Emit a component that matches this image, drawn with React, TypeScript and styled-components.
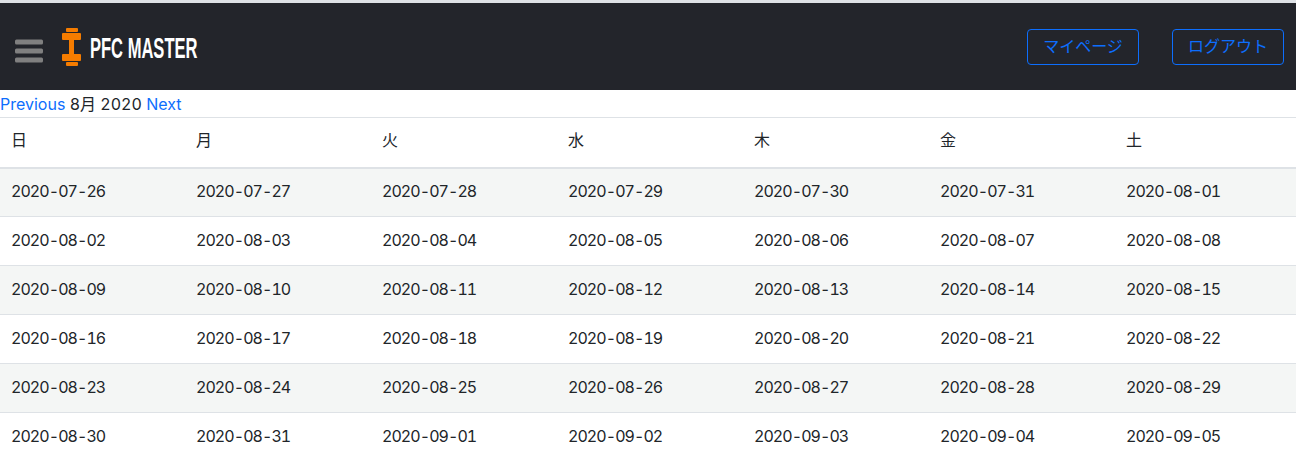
import React from 'react'
import styled, { createGlobalStyle } from 'styled-components'

const GlobalStyle = createGlobalStyle`
  html, body {
    margin: 0;
    background: #fff;
  }
  body {
    font-family: Inter, "Noto Sans CJK JP", sans-serif;
    font-size: 16px;
    line-height: 24px;
    font-variant-numeric: tabular-nums;
    color: #212529;
  }
`

const Page = styled.div`
  border-top: 3px solid #dee2e6;
`

const Navbar = styled.nav`
  height: 87px;
  background: #23252b;
  display: flex;
  align-items: center;
  justify-content: space-between;
  padding: 0 12px 0 15px;
`

const Brand = styled.div`
  display: flex;
  align-items: center;
`

const MenuIcon = styled.svg`
  width: 28px;
  height: 24px;
  margin: 8px 19px 0 0;
`

const Logo = styled.svg`
  width: 19px;
  height: 38px;
  margin-right: 9px;
`

const BrandName = styled.span`
  display: inline-block;
  padding-top: 2px;
  font-family: "Liberation Sans", sans-serif;
  font-weight: 700;
  font-size: 29px;
  line-height: 28px;
  color: #fff;
  white-space: nowrap;
  transform: scaleX(0.57);
  transform-origin: left center;
`

const NavActions = styled.div`
  display: flex;
  gap: 33px;
`

const OutlineButton = styled.button`
  width: 112px;
  height: 36px;
  padding: 0 0 4px;
  background: transparent;
  border: 1px solid #0d6efd;
  border-radius: 4px;
  color: #0d6efd;
  font-family: "Noto Sans CJK JP", sans-serif;
  font-size: 16px;
  line-height: 24px;
`

const MonthBar = styled.div`
  height: 26px;
  padding-top: 1px;
  line-height: 27px;
  white-space: pre;
`

const MonthLink = styled.a`
  color: #0d6efd;
`

const Table = styled.table`
  width: 100%;
  table-layout: fixed;
  border-collapse: collapse;
`

const Th = styled.th`
  box-sizing: border-box;
  width: 186px;
  height: 50px;
  padding: 0 11px 4px;
  text-align: left;
  font-weight: 400;
  border-top: 1px solid #dee2e6;
  border-bottom: 2px solid #dee2e6;

  &:first-child {
    width: 185px;
  }

  &:last-child {
    width: auto;
  }
`

const Row = styled.tr<{ $striped: boolean }>`
  background: ${(p) => (p.$striped ? '#f4f6f5' : '#fff')};

  &:not(:last-child) td {
    border-bottom: 1px solid #dee2e6;
  }
`

const Td = styled.td`
  box-sizing: border-box;
  height: 49px;
  padding: 0 11px 2px;
  letter-spacing: -0.95px;
  white-space: nowrap;
`

const DAYS = ['日', '月', '火', '水', '木', '金', '土']

const WEEKS = [
  ['2020-07-26', '2020-07-27', '2020-07-28', '2020-07-29', '2020-07-30', '2020-07-31', '2020-08-01'],
  ['2020-08-02', '2020-08-03', '2020-08-04', '2020-08-05', '2020-08-06', '2020-08-07', '2020-08-08'],
  ['2020-08-09', '2020-08-10', '2020-08-11', '2020-08-12', '2020-08-13', '2020-08-14', '2020-08-15'],
  ['2020-08-16', '2020-08-17', '2020-08-18', '2020-08-19', '2020-08-20', '2020-08-21', '2020-08-22'],
  ['2020-08-23', '2020-08-24', '2020-08-25', '2020-08-26', '2020-08-27', '2020-08-28', '2020-08-29'],
  ['2020-08-30', '2020-08-31', '2020-09-01', '2020-09-02', '2020-09-03', '2020-09-04', '2020-09-05'],
]

const App = () => {
  return (
    <Page>
      <GlobalStyle />
      <Navbar>
        <Brand>
          <MenuIcon viewBox="0 0 28 24">
            <rect x="0" y="0.5" width="28" height="5" rx="1.5" fill="#808080" />
            <rect x="0" y="9.5" width="28" height="5" rx="1.5" fill="#808080" />
            <rect x="0" y="18.5" width="28" height="5" rx="1.5" fill="#808080" />
          </MenuIcon>
          <Logo viewBox="0 0 19 38">
            <rect x="4" y="0" width="12" height="4" rx="1" fill="#f57c00" />
            <rect x="0" y="5" width="19" height="7" rx="1" fill="#f57c00" />
            <rect x="7" y="12" width="5" height="14" fill="#f57c00" />
            <rect x="0" y="26" width="19" height="7" rx="1" fill="#f57c00" />
            <rect x="4" y="34" width="12" height="4" rx="1" fill="#f57c00" />
          </Logo>
          <BrandName>PFC MASTER</BrandName>
        </Brand>
        <NavActions>
          <OutlineButton>マイページ</OutlineButton>
          <OutlineButton>ログアウト</OutlineButton>
        </NavActions>
      </Navbar>
      <MonthBar>
        <MonthLink>Previous</MonthLink> 8月 2020 <MonthLink>Next</MonthLink>
      </MonthBar>
      <Table>
        <thead>
          <tr>
            {DAYS.map((d) => (
              <Th key={d}>{d}</Th>
            ))}
          </tr>
        </thead>
        <tbody>
          {WEEKS.map((week, i) => (
            <Row key={week[0]} $striped={i % 2 === 0}>
              {week.map((date) => (
                <Td key={date}>{date}</Td>
              ))}
            </Row>
          ))}
        </tbody>
      </Table>
    </Page>
  )
}

export default App
